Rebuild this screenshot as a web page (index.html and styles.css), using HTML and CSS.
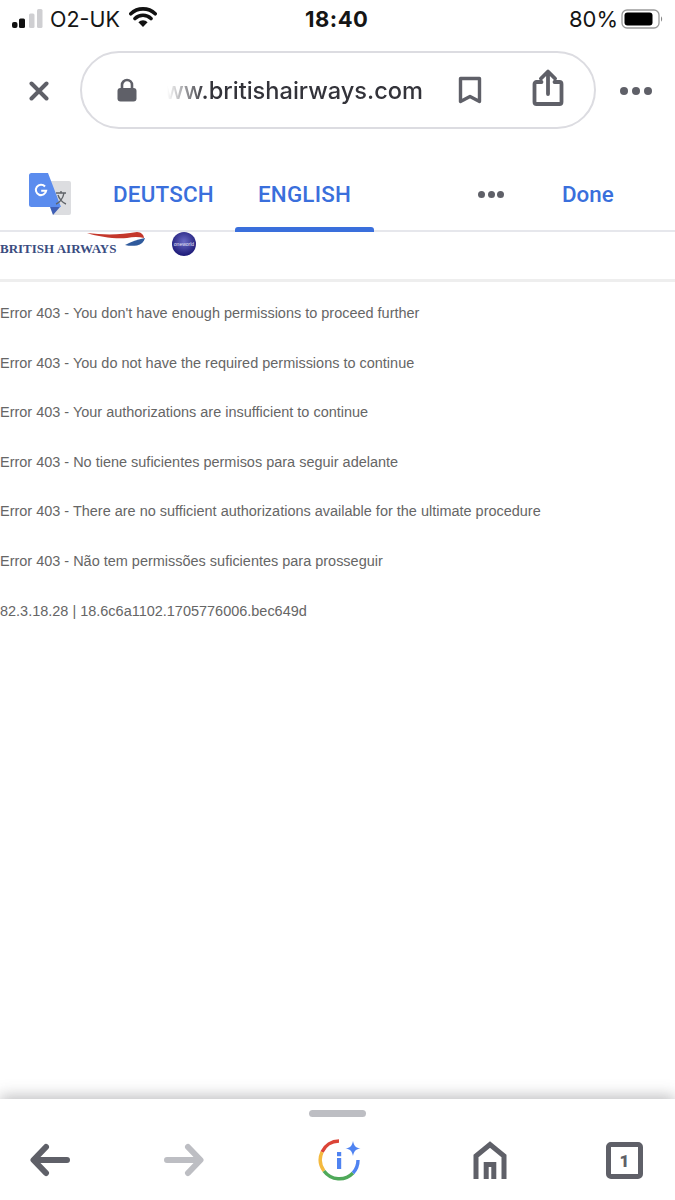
FILE: index.html
```html
<!DOCTYPE html>
<html lang="en">
<head>
<meta charset="utf-8">
<title>Error 403</title>
<link rel="stylesheet" href="styles.css">
</head>
<body>
<div class="page">
  <div class="status">
    <div class="status-left">
      <svg class="signal" width="31" height="28" viewBox="0 0 31 28"><rect x="0" y="18" width="5.500" height="6" rx="2" fill="#111"/><rect x="7" y="14.500" width="6" height="9.500" rx="1.500" fill="#111"/><rect x="17" y="9.500" width="5.500" height="14.500" rx="1.500" fill="#cfcfd2"/><rect x="25" y="5" width="5.500" height="19" rx="1.500" fill="#cfcfd2"/></svg>
      <span class="carrier">O2-UK</span>
      <svg class="wifi" width="28" height="21" viewBox="0 0 28 21"><path d="M14 20l-4.600-4.800a6.500 6.500 0 0 1 9.200 0z" fill="#111"/><path d="M6 11.500a11.500 11.500 0 0 1 16 0M1.800 6.800a17.500 17.500 0 0 1 24.400 0" fill="none" stroke="#111" stroke-width="3.600" stroke-linecap="round"/></svg>
    </div>
    <div class="status-time">18:40</div>
    <div class="status-right">
      <span>80%</span>
      <svg width="42" height="22" viewBox="0 0 42 22"><rect x="1" y="2" width="37" height="18" rx="5" fill="none" stroke="#9a9a9a" stroke-width="1.300"/><rect x="3.500" y="4.500" width="28" height="13" rx="3" fill="#000"/><path d="M40 8.500c1.500.5 1.500 4.500 0 5z" fill="#888"/></svg>
    </div>
  </div>

  <div class="addr-row">
    <svg class="close" width="20" height="20" viewBox="0 0 20 20"><path d="M2.500 2.500l15 15M17.500 2.500l-15 15" stroke="#5f6068" stroke-width="4" stroke-linecap="round"/></svg>
    <div class="addr">
      <svg class="lock" width="20" height="24" viewBox="0 0 20 24"><path d="M5 11V7a5 5 0 0 1 10 0v4" fill="none" stroke="#5f6068" stroke-width="2.600"/><rect x="0.500" y="10" width="19" height="13.500" rx="3" fill="#5f6068"/></svg>
      <div class="url">ww.britishairways.com</div>
      <svg class="bookmark" width="24" height="28" viewBox="0 0 24 28"><path d="M2.500 2.500h19v23l-9.500-5-9.500 5z" fill="none" stroke="#5f6068" stroke-width="3.400" stroke-linejoin="round"/></svg>
      <svg class="share" width="32" height="38" viewBox="0 0 32 38"><path d="M9.500 13H4.500a2 2 0 0 0-2 2v18a2 2 0 0 0 2 2h23a2 2 0 0 0 2-2V15a2 2 0 0 0-2-2h-5M16 25V4M9 9.500L16 2.500l7 7" fill="none" stroke="#5f6068" stroke-width="3.800" stroke-linejoin="round" stroke-linecap="round"/></svg>
    </div>
    <div class="dots dots-addr"><i></i><i></i><i></i></div>
  </div>

  <div class="translate">
    <svg class="gt" width="42" height="42" viewBox="0 0 42 42"><path d="M20 8h20a2 2 0 0 1 2 2v30a2 2 0 0 1-2 2H24z" fill="#dcdde0"/><path d="M2.500 0H19l13 34H2.500A2.500 2.500 0 0 1 0 31.500v-29A2.500 2.500 0 0 1 2.500 0z" fill="#5b8cee"/><path d="M21 34l3 8 7-8z" fill="#3f5fb5"/><path d="M16 13.500a5.200 5.200 0 1 0 1.200 4.200h-5" fill="none" stroke="#fff" stroke-width="2"/><path d="M27 20h10M32 18v2M35 20c-1 6-5 10-8 11M29 22c1 4 5 8 8 9" fill="none" stroke="#5f6368" stroke-width="1.400"/></svg>
    <div class="tab tab-first">DEUTSCH</div>
    <div class="tab tab-active">ENGLISH</div>
    <div class="dots dots-tr"><i></i><i></i><i></i></div>
    <div class="done">Done</div>
  </div>

  <div class="site-head">
    <div class="ba">
      <span class="ba-name">BRITISH AIRWAYS</span>
      <svg class="ba-mark" width="60" height="18" viewBox="0 0 60 18"><path d="M0 1c16 2 34 2 50-1 4 0 7 3 7 6-5-1.500-11-1.500-17 0C28 7 12 5 0 1z" fill="#c4372b"/><path d="M38 13c6-3.500 13-5.500 20-7-1 4-4 6.500-8 7.500-4 .5-8 .5-12-.5z" fill="#2f5a9c"/></svg>
      <div class="oneworld"><span>oneworld</span></div>
    </div>
  </div>

  <main class="content">
    <p>Error 403 - You don't have enough permissions to proceed further</p>
    <p>Error 403 - You do not have the required permissions to continue</p>
    <p>Error 403 - Your authorizations are insufficient to continue</p>
    <p>Error 403 - No tiene suficientes permisos para seguir adelante</p>
    <p>Error 403 - There are no sufficient authorizations available for the ultimate procedure</p>
    <p>Error 403 - Não tem permissões suficientes para prosseguir</p>
    <p>82.3.18.28 | 18.6c6a1102.1705776006.bec649d</p>
  </main>

  <nav class="toolbar">
    <div class="handle"></div>
    <div class="tools">
      <svg class="t-back" width="40" height="34" viewBox="0 0 40 34"><path d="M37 17H4M16 4L3.500 17 16 30" fill="none" stroke="#5f6068" stroke-width="6" stroke-linecap="round" stroke-linejoin="round"/></svg>
      <svg class="t-fwd" width="40" height="34" viewBox="0 0 40 34"><path d="M3 17h33M24 4l12.500 13L24 30" fill="none" stroke="#bdbec3" stroke-width="6" stroke-linecap="round" stroke-linejoin="round"/></svg>
      <svg class="t-lens" width="44" height="44" viewBox="0 0 44 44"><path d="M4 14A19 19 0 0 1 21 3" fill="none" stroke="#db4437" stroke-width="3.400"/><path d="M4 14A19 19 0 0 0 6 33" fill="none" stroke="#f4b93e" stroke-width="3.400"/><path d="M6 33A19 19 0 0 0 35 35" fill="none" stroke="#4fa95a" stroke-width="3.400"/><path d="M35 35A19 19 0 0 0 40 22" fill="none" stroke="#4f83f1" stroke-width="3.400"/><rect x="19" y="14" width="4.200" height="4.200" fill="#4f83f1"/><rect x="19" y="20" width="4.200" height="11" fill="#4f83f1"/><path d="M35 3c1 5 3 7 7.500 7.500C38 11 36 13 35 18c-1-5-3-7-7.500-7.500C32 10 34 8 35 3z" fill="#4f83f1"/></svg>
      <svg class="t-home" width="34" height="38" viewBox="0 0 34 38"><path d="M3 38V15L17 3.500 31 15v23M13.200 38V23.500h7.600V38" fill="none" stroke="#5f6068" stroke-width="5" stroke-linejoin="miter"/></svg>
      <div class="tabs-btn">1</div>
    </div>
  </nav>
</div>
</body>
</html>
```

FILE: styles.css
```css
* { box-sizing: border-box; }
html, body { margin: 0; padding: 0; background: #fff; }
.page { width: 675px; height: 1200px; display: flex; flex-direction: column; overflow: hidden; font-family: "Inter", "Liberation Sans", sans-serif; }

.status { height: 37px; display: flex; align-items: center; justify-content: space-between; padding: 0 10px 0 12px; position: relative; font-size: 22px; color: #151515; }
.status-left { display: flex; align-items: center; gap: 7px; }
.carrier { font-size: 21.500px; }
.signal { margin-top: -2px; }
.wifi { margin-left: 2px; margin-top: -2px; }
.status-time { font-weight: 700; font-size: 22px; letter-spacing: .5px; position: absolute; left: 305px; }
.status-right { display: flex; align-items: center; gap: 3px; margin-right: 2px; }

.addr-row { height: 123px; display: flex; align-items: flex-start; padding: 14px 0 0 29px; }
.close { margin-top: 30px; flex: none; }
.addr { width: 516px; height: 78px; margin-left: 31px; border: 2px solid #dcdce1; border-radius: 39px; display: flex; align-items: center; padding-left: 35px; flex: none; }
.lock { flex: none; }
.url { width: 260px; margin-left: 26px; font-size: 23.600px; font-weight: 500; color: #33333a; white-space: nowrap; text-align: right; -webkit-mask-image: linear-gradient(to right, transparent 4px, #000 42px); mask-image: linear-gradient(to right, transparent 4px, #000 42px); flex: none; }
.bookmark { margin-left: 35px; flex: none; }
.share { margin-left: 50px; margin-top: -4px; flex: none; }
.dots { display: flex; gap: 2.500px; }
.dots i { width: 7px; height: 7px; border-radius: 50%; background: #5f6068; display: block; }
.dots-addr { margin: 36px 0 0 24px; gap: 4px; }
.dots-addr i { width: 8px; height: 8px; }

.translate { height: 72px; flex: none; display: flex; align-items: center; padding-left: 29px; border-bottom: 2px solid #e6e7ec; position: relative; }
.gt { flex: none; margin-top: -3px; }
.tab { font-family: "Roboto", "Liberation Sans", sans-serif; font-weight: 500; font-size: 22.400px; color: #3a6fdc; letter-spacing: .2px; height: 72px; display: flex; align-items: center; }
.tab-first { margin-left: 42px; width: 122px; padding-bottom: 3px; }
.tab-active { width: 139px; justify-content: center; position: relative; padding-bottom: 3px; }
.tab-active::after { content: ""; position: absolute; left: 0; right: 0; bottom: -1px; height: 5px; background: #3a6fdc; border-radius: 3px 3px 0 0; }
.dots-tr { margin-left: 104px; margin-top: -2px; }
.done { font-family: "Roboto", "Liberation Sans", sans-serif; font-weight: 500; font-size: 22.400px; color: #3a6fdc; margin-left: 58px; margin-top: -3px; }

.site-head { height: 50px; flex: none; border-bottom: 3px solid #eeeeee; }
.ba { position: relative; height: 47px; }
.ba-name { position: absolute; left: 0; top: 9px; font-family: "Liberation Serif", serif; font-size: 13px; font-weight: 700; color: #3a4c80; white-space: nowrap; }
.ba-mark { position: absolute; left: 87px; top: 0; }
.oneworld { position: absolute; left: 172px; top: 0; width: 24px; height: 24px; border-radius: 50%; background: radial-gradient(circle at 50% 40%, #6a6ac4, #1d1a78 75%); display: flex; align-items: center; justify-content: center; }
.oneworld span { font-family: "Liberation Sans", sans-serif; font-size: 5px; color: #e4e5f7; }

.content { flex: 1; padding-top: 21px; font-family: "Liberation Sans", Arial, sans-serif; font-size: 14.480px; color: #666; }
.content p { margin: 0; height: 49.600px; line-height: 20px; white-space: nowrap; }

.toolbar { height: 101px; flex: none; position: relative; background: #fff; box-shadow: 0 -3px 14px rgba(70,70,75,.35); padding-top: 11px; }
.handle { width: 57px; height: 7px; border-radius: 4px; background: #bdbec3; margin: 0 auto; }
.tools { display: flex; align-items: flex-end; padding-left: 30px; margin-top: 15px; height: 47px; }
.t-back { margin-bottom: 2px; }
.t-fwd { margin-left: 94px; margin-bottom: 2px; }
.t-lens { margin-left: 114px; margin-bottom: -3px; }
.t-home { margin-left: 111px; }
.tabs-btn { width: 37px; height: 37px; margin-left: 99px; border: 5px solid #5f6068; border-radius: 5px; display: flex; align-items: center; justify-content: center; font-family: "Roboto", sans-serif; font-weight: 900; font-size: 17px; color: #5f6068; }
```
